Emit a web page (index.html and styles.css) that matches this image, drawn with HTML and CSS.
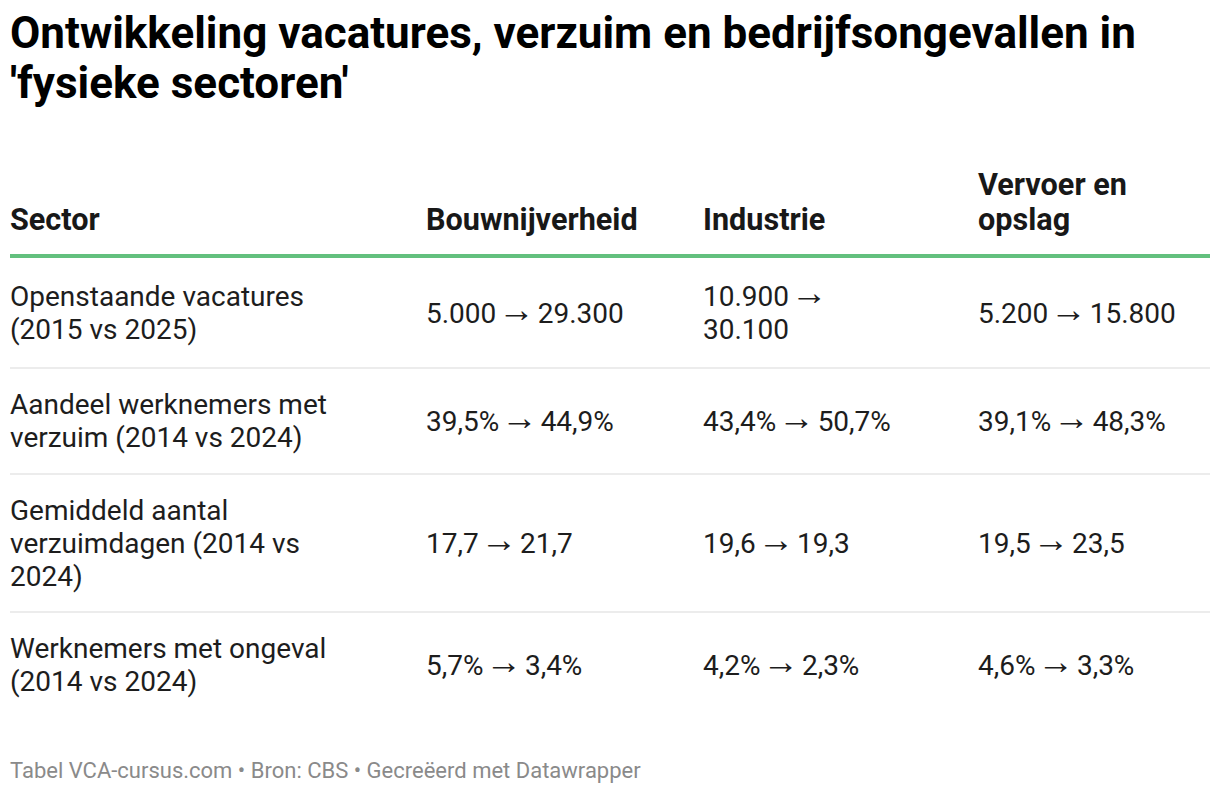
FILE: index.html
```html
<!DOCTYPE html>
<html lang="nl">
<head>
<meta charset="utf-8">
<title>Ontwikkeling vacatures, verzuim en bedrijfsongevallen</title>
<link rel="stylesheet" href="styles.css">
</head>
<body>
<div class="chart">
  <h1 class="title">Ontwikkeling vacatures, verzuim en bedrijfsongevallen in<br>'fysieke sectoren'</h1>
  <table class="data">
    <colgroup>
      <col class="c1"><col class="c2"><col class="c3"><col class="c4">
    </colgroup>
    <thead>
      <tr>
        <th>Sector</th>
        <th>Bouwnijverheid</th>
        <th>Industrie</th>
        <th>Vervoer en<br>opslag</th>
      </tr>
    </thead>
    <tbody>
      <tr class="r1">
        <td>Openstaande vacatures<br>(2015 vs 2025)</td>
        <td>5.000<span class="arr">→</span>29.300</td>
        <td>10.900<span class="arr">→</span><br>30.100</td>
        <td>5.200<span class="arr">→</span>15.800</td>
      </tr>
      <tr>
        <td>Aandeel werknemers met<br>verzuim (2014 vs 2024)</td>
        <td>39,5%<span class="arr">→</span>44,9%</td>
        <td>43,4%<span class="arr">→</span>50,7%</td>
        <td>39,1%<span class="arr">→</span>48,3%</td>
      </tr>
      <tr class="r3">
        <td>Gemiddeld aantal<br>verzuimdagen (2014 vs<br>2024)</td>
        <td>17,7<span class="arr">→</span>21,7</td>
        <td>19,6<span class="arr">→</span>19,3</td>
        <td>19,5<span class="arr">→</span>23,5</td>
      </tr>
      <tr>
        <td>Werknemers met ongeval<br>(2014 vs 2024)</td>
        <td>5,7%<span class="arr">→</span>3,4%</td>
        <td>4,2%<span class="arr">→</span>2,3%</td>
        <td>4,6%<span class="arr">→</span>3,3%</td>
      </tr>
    </tbody>
  </table>
  <p class="footer">Tabel VCA-cursus.com • Bron: CBS • Gecreëerd met Datawrapper</p>
</div>
</body>
</html>
```

FILE: styles.css
```css
html, body {
  margin: 0;
  padding: 0;
  background: #ffffff;
}

body {
  font-family: Roboto, "Liberation Sans", sans-serif;
  color: #1d1d1d;
}

.chart {
  padding: 8px 10px 0 10px;
}

.title {
  margin: 0;
  font-size: 44px;
  font-weight: 700;
  line-height: 50px;
  color: #000000;
}

.data {
  margin-top: 59px;
  width: 1200px;
  border-collapse: collapse;
  table-layout: fixed;
}

.c1 { width: 416px; }
.c2 { width: 277px; }
.c3 { width: 275px; }
.c4 { width: 232px; }

.data th {
  text-align: left;
  vertical-align: bottom;
  font-size: 30.6px;
  font-weight: 700;
  line-height: 35px;
  color: #181818;
  padding: 0 0 17px 0;
  border-bottom: 4px solid #63c07e;
}

.data td {
  font-size: 28px;
  line-height: 33px;
  vertical-align: middle;
  padding: 19px 0 19px 0;
  border-bottom: 2px solid #ececec;
}

.data tr.r1 td {
  padding-top: 22px;
  padding-bottom: 21px;
}

.data tr.r3 td {
  padding-bottom: 18px;
}

.data tbody tr:last-child td {
  border-bottom: none;
}

.arr {
  font-family: Roboto, sans-serif;
  font-size: 1.3em;
  line-height: 0;
  vertical-align: 1px;
  margin: 0 3px 0 2px;
}

.footer {
  margin: 41px 0 0 0;
  font-size: 22px;
  line-height: 26px;
  color: #8a8a8a;
}
```
